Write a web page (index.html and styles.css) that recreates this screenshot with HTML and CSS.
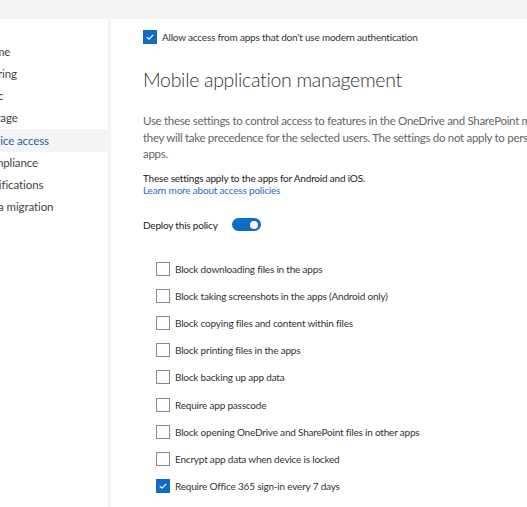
FILE: index.html
```html
<!DOCTYPE html>
<html lang="en">
<head>
<meta charset="utf-8">
<title>Device access</title>
<link rel="stylesheet" href="styles.css">
</head>
<body>
<div class="topbar"></div>
<div class="layout">
  <nav class="nav">
    <a class="nav-item">Home</a>
    <a class="nav-item">Sharing</a>
    <a class="nav-item">Sync</a>
    <a class="nav-item">Storage</a>
    <a class="nav-item active">Device access</a>
    <a class="nav-item">Compliance</a>
    <a class="nav-item">Notifications</a>
    <a class="nav-item">Data migration</a>
  </nav>
  <div class="divider"></div>
  <main class="main">
    <label class="check-row top-check">
      <span class="box checked"><svg viewBox="0 0 14 14"><path d="M3.2 7.2 L5.8 9.6 L10.8 4.4" /></svg></span>
      <span>Allow access from apps that don't use modern authentication</span>
    </label>
    <h1 class="title">Mobile application management</h1>
    <p class="desc">Use these settings to control access to features in the OneDrive and SharePoint mobile apps. If you create app protection policies in Microsoft Intune,<br>they will take precedence for the selected users. The settings do not apply to personal devices that are not managed by your organization's<br>apps.</p>
    <p class="note">These settings apply to the apps for Android and iOS.<br><a class="link">Learn more about access policies</a></p>
    <div class="deploy">
      <span>Deploy this policy</span>
      <span class="toggle"><span class="knob"></span></span>
    </div>
    <div class="options">
      <label class="check-row"><span class="box"></span><span>Block downloading files in the apps</span></label>
      <label class="check-row"><span class="box"></span><span>Block taking screenshots in the apps (Android only)</span></label>
      <label class="check-row"><span class="box"></span><span>Block copying files and content within files</span></label>
      <label class="check-row"><span class="box"></span><span>Block printing files in the apps</span></label>
      <label class="check-row"><span class="box"></span><span>Block backing up app data</span></label>
      <label class="check-row"><span class="box"></span><span>Require app passcode</span></label>
      <label class="check-row"><span class="box"></span><span>Block opening OneDrive and SharePoint files in other apps</span></label>
      <label class="check-row"><span class="box"></span><span>Encrypt app data when device is locked</span></label>
      <label class="check-row"><span class="box checked"><svg viewBox="0 0 14 14"><path d="M3.2 7.2 L5.8 9.6 L10.8 4.4" /></svg></span><span>Require Office 365 sign-in every 7 days</span></label>
    </div>
  </main>
</div>
</body>
</html>
```

FILE: styles.css
```css
html, body {
  margin: 0;
  padding: 0;
  background: #ffffff;
  overflow: hidden;
}
body {
  width: 527px;
  height: 507px;
  font-family: "Lato", "Open Sans", sans-serif;
  color: #333333;
}
.topbar {
  height: 19px;
  background: #f4f4f4;
}
.layout {
  display: flex;
  height: 488px;
}
.nav {
  width: 108px;
  flex: none;
  display: flex;
  flex-direction: column;
  padding-top: 22px;
  overflow: hidden;
}
.nav-item {
  display: block;
  height: 22px;
  line-height: 22px;
  font-size: 11.5px;
  letter-spacing: -0.1px;
  color: #444444;
  white-space: nowrap;
  text-indent: -20px;
}
.nav-item.active {
  background: #f4f4f4;
  color: #1f62a6;
  height: 23px;
  line-height: 23px;
}
.divider {
  width: 3px;
  flex: none;
  background: #f4f4f4;
}
.main {
  flex: 1;
  padding-left: 32px;
  min-width: 0;
  white-space: nowrap;
}
.check-row {
  display: flex;
  align-items: center;
  gap: 5px;
  font-size: 10px;
  letter-spacing: -0.2px;
  color: #333333;
  height: 27.1px;
}
.top-check {
  margin-top: 4px;
  height: 27px;
}
.box {
  width: 12px;
  height: 12px;
  border: 1px solid #8a8a8a;
  background: #ffffff;
  flex: none;
  display: flex;
}
.box.checked {
  background: #0f6cc4;
  border-color: #0f6cc4;
}
.box svg {
  width: 12px;
  height: 12px;
}
.box path {
  fill: none;
  stroke: #ffffff;
  stroke-width: 1.3;
}
.title {
  font-size: 19.5px;
  font-weight: 300;
  letter-spacing: -0.3px;
  color: #333333;
  margin: 16px 0 0;
  line-height: 28px;
}
.desc {
  font-size: 11.5px;
  letter-spacing: -0.3px;
  line-height: 16.5px;
  color: #666666;
  margin: 19px 0 0;
}
.note {
  font-size: 10px;
  letter-spacing: -0.2px;
  line-height: 12px;
  color: #222222;
  margin: 9px 0 0;
}
.link {
  color: #1f70c1;
}
.deploy {
  display: flex;
  align-items: center;
  gap: 14px;
  font-size: 10px;
  letter-spacing: -0.2px;
  color: #222222;
  margin-top: 21px;
  height: 16px;
}
.toggle {
  width: 29px;
  height: 13px;
  border-radius: 7px;
  background: #0f6cc4;
  display: flex;
  align-items: center;
  justify-content: flex-end;
  padding-right: 3px;
  box-sizing: border-box;
}
.knob {
  width: 8px;
  height: 8px;
  border-radius: 50%;
  background: #ffffff;
}
.options {
  margin-top: 23px;
  padding-left: 13px;
  display: flex;
  flex-direction: column;
}
```
